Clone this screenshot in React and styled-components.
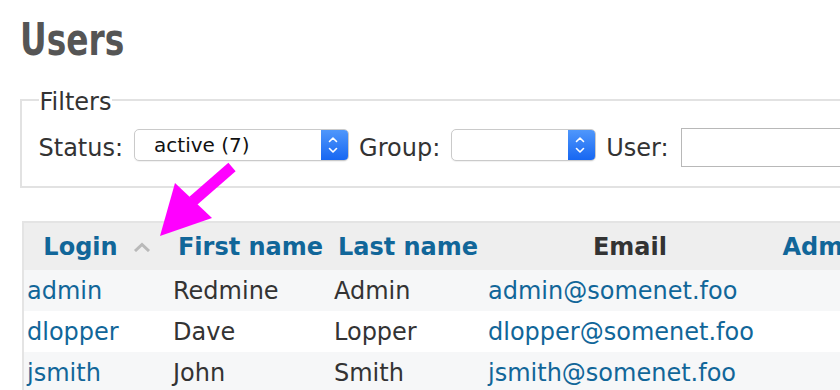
import React from "react";
import styled, { createGlobalStyle } from "styled-components";

const Global = createGlobalStyle`
  html, body { margin: 0; padding: 0; background: #fff; overflow: hidden; }
  body { font-family: "DejaVu Sans", Verdana, sans-serif; font-size: 24px; color: #333; }
`;

const Page = styled.div`
  position: relative;
  width: 1100px;
  padding: 18px 0 0 20px;
`;

const Title = styled.h2`
  margin: 0;
  font-family: "DejaVu Sans Condensed", "DejaVu Sans", sans-serif;
  font-weight: bold;
  font-size: 44px;
  line-height: 44px;
  color: #555;
`;

const TitleText = styled.span`
  display: inline-block;
  transform: scaleX(0.83);
  transform-origin: left center;
`;

const Filters = styled.fieldset`
  margin: 22px 0 0 0;
  width: 1000px;
  padding: 12px 17px 19px 16.5px;
  border: 2px solid #e2e2e2;
  min-inline-size: 0;
`;

const Legend = styled.legend`
  padding: 4px 1px 0 1px;
  font-size: 24px;
  line-height: 28px;
  color: #333;
`;

const FilterRow = styled.div`
  display: flex;
  align-items: center;
`;

const Label = styled.label`
  font-size: 24px;
  line-height: 28px;
  color: #333;
  margin-right: ${(p) => p.$gap || 11}px;
`;

const Select = styled.div`
  box-sizing: border-box;
  display: flex;
  align-items: center;
  width: ${(p) => p.$w}px;
  height: 32px;
  margin-bottom: 5px;
  margin-right: 10px;
  border: 1px solid #cacaca;
  border-radius: 5px;
  background: #fff;
  box-shadow: 0 1px 1px rgba(0, 0, 0, 0.06);
  overflow: hidden;
`;

const SelectText = styled.span`
  flex: 1;
  padding-left: 19px;
  font-size: 20px;
  line-height: 30px;
  color: #111;
  white-space: nowrap;
`;

const SelectButton = styled.span`
  display: flex;
  align-items: center;
  justify-content: center;
  width: 27px;
  height: 100%;
  padding-right: 3px;
  box-sizing: border-box;
  background: linear-gradient(#4f97fb, #1767f2);
`;

const TextInput = styled.div`
  box-sizing: border-box;
  width: 300px;
  height: 39px;
  border: 1px solid #b8b8b8;
  background: #fff;
`;

const Table = styled.table`
  margin: 33px 0 0 2px;
  border-collapse: separate;
  border-spacing: 0;
  border: 2px solid #e4e4e4;
  table-layout: fixed;
  width: ${146 + 161 + 154 + 290 + 203 + 4}px;
`;

const Th = styled.th`
  width: ${(p) => p.$w}px;
  height: 47px;
  padding: 0;
  background: #eee;
  text-align: center;
  vertical-align: middle;
  font-size: 24px;
  font-weight: bold;
  color: ${(p) => (p.$link ? "#169" : "#333")};
  white-space: nowrap;
`;

const SortWrap = styled.span`
  display: inline-flex;
  align-items: center;
  gap: 15px;
`;

const Row = styled.tr`
  height: 41px;
  background: ${(p) => (p.$odd ? "#f6f7f8" : "#fff")};
`;

const Td = styled.td`
  padding: 1px 0 0 3px;
  font-size: 24px;
  color: ${(p) => (p.$link ? "#169" : "#333")};
  vertical-align: middle;
  white-space: nowrap;
`;

const Arrow = styled.svg`
  position: absolute;
  left: 0;
  top: 0;
  pointer-events: none;
`;

const Chevrons = () => (
  <svg width="10" height="20" viewBox="0 0 10 20">
    <polyline points="1.5,6.5 5,3 8.5,6.5" fill="none" stroke="#fff" strokeWidth="1.6" strokeLinecap="round" strokeLinejoin="round" />
    <polyline points="1.5,13.5 5,17 8.5,13.5" fill="none" stroke="#fff" strokeWidth="1.6" strokeLinecap="round" strokeLinejoin="round" />
  </svg>
);

const SortUp = () => (
  <svg width="18" height="10" viewBox="0 0 18 10">
    <polyline points="2,9 9,2.5 16,9" fill="none" stroke="#b9b9b9" strokeWidth="3" />
  </svg>
);

const users = [
  ["admin", "Redmine", "Admin", "admin@somenet.foo"],
  ["dlopper", "Dave", "Lopper", "dlopper@somenet.foo"],
  ["jsmith", "John", "Smith", "jsmith@somenet.foo"],
];

export default function App() {
  return (
    <>
      <Global />
      <Page>
        <Title><TitleText>Users</TitleText></Title>
        <Filters>
          <Legend>Filters</Legend>
          <FilterRow>
            <Label>Status:</Label>
            <Select $w={215}>
              <SelectText>active (7)</SelectText>
              <SelectButton><Chevrons /></SelectButton>
            </Select>
            <Label>Group:</Label>
            <Select $w={145}>
              <SelectText></SelectText>
              <SelectButton><Chevrons /></SelectButton>
            </Select>
            <Label $gap={12}>User:</Label>
            <TextInput />
          </FilterRow>
        </Filters>
        <Table>
          <thead>
            <tr>
              <Th $w={146} $link>
                <SortWrap>Login<SortUp /></SortWrap>
              </Th>
              <Th $w={161} $link>First name</Th>
              <Th $w={154} $link>Last name</Th>
              <Th $w={290}>Email</Th>
              <Th $w={203} $link>Administrator</Th>
            </tr>
          </thead>
          <tbody>
            {users.map((u, i) => (
              <Row key={u[0]} $odd={i % 2 === 0}>
                <Td $link>{u[0]}</Td>
                <Td>{u[1]}</Td>
                <Td>{u[2]}</Td>
                <Td $link>{u[3]}</Td>
                <Td></Td>
              </Row>
            ))}
          </tbody>
        </Table>
        <Arrow width="840" height="390" viewBox="0 0 840 390">
          <line x1="232" y1="167" x2="193" y2="201" stroke="#ff00ff" strokeWidth="11" />
          <polygon points="160,236 175,183 212,218" fill="#ff00ff" />
        </Arrow>
      </Page>
    </>
  );
}
